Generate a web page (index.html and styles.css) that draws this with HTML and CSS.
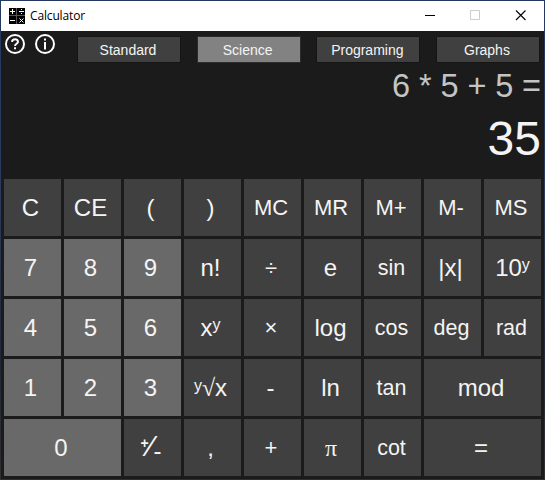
FILE: index.html
```html
<!DOCTYPE html>
<html lang="en">
<head>
<meta charset="utf-8">
<title>Calculator</title>
<link rel="stylesheet" href="styles.css">
</head>
<body>
<div class="window">
  <header class="titlebar">
    <svg class="app-icon" width="16" height="16" viewBox="0 0 16 16" shape-rendering="crispEdges">
      <path fill="#000" d="M0 0h16v16H0z"/>
      <path fill="#555" d="M7 0h1v16h-1zM0 7h16v1H0z"/>
      <path fill="#fff" d="M1 3h5v1H1zM3 1h1v5H3zM10 3h5v1h-5zM12 1h1v1h-1zM12 5h1v1h-1zM1 12h5v1H1z"/>
      <path stroke="#fff" shape-rendering="auto" d="M10.500 10.500l4 4m0-4l-4 4"/>
    </svg>
    <span class="title">Calculator</span>
    <svg class="controls" width="138" height="30" viewBox="0 0 138 30" fill="none">
      <path d="M19 14.500h10" stroke="#000"/>
      <path d="M64.500 9.500h9v9h-9z" stroke="#ccc"/>
      <path d="M110 9.500l9.500 9.500M119.500 9.500l-9.500 9.500" stroke="#000" stroke-width="1.100"/>
    </svg>
  </header>
  <nav class="toolbar">
    <svg class="info-icon" width="22" height="22" viewBox="0 0 22 22" fill="none" stroke="#fff" stroke-width="2">
      <circle cx="11" cy="11" r="9"/>
      <path d="M8 8.800c.3-3.400 6-3.400 6-.1 0 2.100-3 2-3 4.300"/>
      <path d="M11 14.300v2"/>
    </svg>
    <svg class="info-icon" width="22" height="22" viewBox="0 0 22 22" fill="none" stroke="#fff" stroke-width="2">
      <circle cx="11" cy="11" r="9"/>
      <path d="M11 5.500v2M11 9v7.500"/>
    </svg>
    <div class="tabs">
      <button class="tab">Standard</button>
      <button class="tab active">Science</button>
      <button class="tab">Programing</button>
      <button class="tab">Graphs</button>
    </div>
  </nav>
  <section class="display">
    <div class="expression">6 * 5 + 5 =</div>
    <div class="result">35</div>
  </section>
  <main class="keys">
    <button>C</button><button>CE</button><button>(</button><button>)</button><button class="mid">MC</button><button class="mid">MR</button><button class="mid">M+</button><button class="mid">M-</button><button class="mid">MS</button>
    <button class="num">7</button><button class="num">8</button><button class="num">9</button><button>n!</button><button class="op">÷</button><button>e</button><button class="small">sin</button><button>|x|</button><button class="power">10<span class="sup">y</span></button>
    <button class="num">4</button><button class="num">5</button><button class="num">6</button><button>x<span class="sup">y</span></button><button class="op">×</button><button>log</button><button class="small">cos</button><button class="small">deg</button><button class="small">rad</button>
    <button class="num">1</button><button class="num">2</button><button class="num">3</button><button><span class="sup index">y</span><span class="root">√</span>x</button><button>-</button><button>ln</button><button class="small">tan</button><button class="wide">mod</button>
    <button class="num wide">0</button><button class="sign"><span class="plus">+</span><span class="slash">⁄</span><span class="minus">-</span></button><button>,</button><button class="op">+</button><button class="pi">π</button><button class="small">cot</button><button class="wide">=</button>
  </main>
</div>
</body>
</html>
```

FILE: styles.css
```css
* { box-sizing: border-box; }
body {
  margin: 0;
  padding: 1px;
  height: 480px;
  overflow: hidden;
  background: linear-gradient(#24385f, #2c3b5e 40%, #202839 75%, #303033);
  font-family: "Liberation Sans", Arial, sans-serif;
}
.window { width: 543px; height: 478px; background: #1b1b1b; }
.titlebar {
  display: flex;
  align-items: center;
  height: 30px;
  padding-left: 8px;
  background: #fff;
}
.title {
  margin-left: 5px;
  font: 12px/16px "Open Sans", "Noto Sans", sans-serif;
  letter-spacing: -0.15px;
  color: #000;
}
.controls { margin-left: auto; }
.toolbar { display: flex; height: 34px; padding: 2px 5px 0 3px; gap: 8px; }
.info-icon { flex: none; }
.tabs { display: flex; flex: 1; justify-content: space-between; padding: 4px 0 0 14px; }
button { border: 0; padding: 0; font: inherit; color: #f4f4f4; background: #404040; }
.tab { width: 102px; height: 25px; padding: 2px 2px 0 0; font-size: 14px; line-height: 23px; outline: 1px solid #151515; }
.tab.active { background: #828282; outline-color: #2b2b2b; }
.display { height: 114px; padding-right: 3px; text-align: right; }
.expression { height: 42px; font-size: 32.500px; line-height: 42px; letter-spacing: -0.1px; color: #c4c4c4; }
.result { height: 64px; font-size: 48px; line-height: 64px; color: #f4f4f4; }
.keys {
  display: grid;
  grid-template-columns: repeat(9, 57px);
  grid-auto-rows: 57px;
  gap: 3px;
  padding-left: 3px;
}
.keys button { padding-right: 4px; font-size: 24px; line-height: 56px; white-space: nowrap; }
.keys .num { background: #696969; }
.keys .wide { grid-column: span 2; padding-right: 3px; }
.keys .mid { padding-right: 3px; font-size: 22px; }
.keys .small { padding-right: 2px; font-size: 21.500px; }
.keys .op { padding-right: 3px; font-size: 22px; }
.keys .power { padding-right: 0; font-size: 24px; }
.sup { font-size: 16px; vertical-align: 6px; line-height: 1; }
.sup.index { vertical-align: 5px; }
.root { font-family: "Liberation Serif", serif; font-size: 24px; line-height: 1; }
.keys .pi { padding-right: 3px; font-family: "Liberation Serif", serif; }
.keys .sign { padding-right: 3px; }
.sign .plus { font-size: 14px; font-weight: bold; vertical-align: 8px; line-height: 1; }
.sign .slash { font-size: 30px; line-height: 1; }
.sign .minus { font-size: 24px; line-height: 1; vertical-align: -3px; }
```
